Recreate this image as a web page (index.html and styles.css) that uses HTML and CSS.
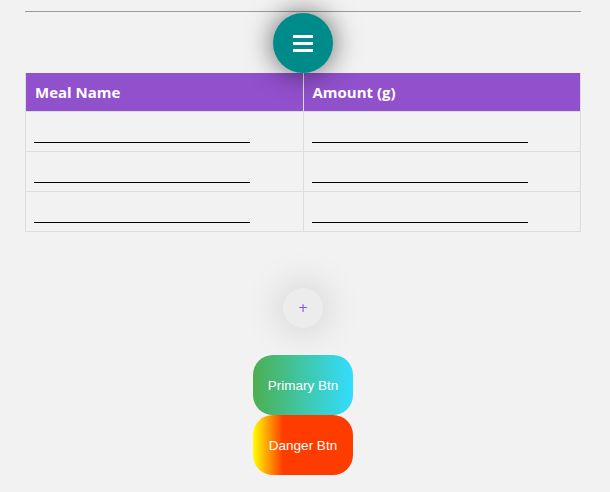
FILE: index.html
```html
<!DOCTYPE html>
<html>
<head>
<meta charset="utf-8">
<link rel="stylesheet" href="styles.css">
</head>
<body>
<div class="page">
  <hr class="rule">
  <div class="menu-row">
    <button class="menu-btn" aria-label="Menu">
      <svg width="20" height="17" viewBox="0 0 20 17"><rect x="0" y="0" width="20" height="3" fill="#fff"/><rect x="0" y="7" width="20" height="3" fill="#fff"/><rect x="0" y="14" width="20" height="3" fill="#fff"/></svg>
    </button>
  </div>
  <table class="meals">
    <thead>
      <tr><th>Meal Name</th><th>Amount (g)</th></tr>
    </thead>
    <tbody>
      <tr><td><input class="field" type="text"></td><td><input class="field" type="text"></td></tr>
      <tr><td><input class="field" type="text"></td><td><input class="field" type="text"></td></tr>
      <tr><td><input class="field" type="text"></td><td><input class="field" type="text"></td></tr>
    </tbody>
  </table>
  <div class="actions">
    <button class="add-btn">+</button>
    <div class="btn-stack">
      <button class="grad-btn primary">Primary Btn</button>
      <button class="grad-btn danger">Danger Btn</button>
    </div>
  </div>
</div>
</body>
</html>
```
FILE: styles.css
```css
html, body {
  margin: 0;
  padding: 0;
  background: #f2f2f2;
}
.page {
  width: 556px;
  margin-left: 25px;
  padding-top: 11px;
}
.rule {
  margin: 0;
  border: 0;
  height: 1px;
  background: #999;
}
.menu-row {
  display: flex;
  justify-content: center;
  padding-top: 1px;
}
.menu-btn {
  width: 60px;
  height: 60px;
  border-radius: 50%;
  border: 0;
  padding: 0;
  background: #008b8b;
  display: flex;
  align-items: center;
  justify-content: center;
  box-shadow: 0 0 28px rgba(0,0,0,0.6);
  position: relative;
  z-index: 1;
}
.meals {
  width: 556px;
  border-collapse: collapse;
  table-layout: fixed;
  font-family: "Open Sans", sans-serif;
}
.meals th {
  background: #9150cc;
  color: #fff;
  font-weight: 700;
  font-size: 15px;
  text-align: left;
  height: 38px;
  padding: 0 9px;
  border: 1px solid #ddd;
  border-top: 0;
  border-bottom: 0;
}
.meals td {
  height: 39px;
  padding: 0 8px;
  border: 1px solid #ddd;
  vertical-align: top;
}
.field {
  display: block;
  box-sizing: border-box;
  width: 216px;
  height: 22px;
  margin-top: 9px;
  border: 0;
  border-bottom: 1px solid #000;
  background: transparent;
  outline: none;
}
.actions {
  display: flex;
  flex-direction: column;
  align-items: center;
  padding-top: 56px;
}
.add-btn {
  width: 40px;
  height: 40px;
  border-radius: 50%;
  border: 0;
  padding: 0;
  background: #ececec;
  color: #9150cc;
  font-family: "DejaVu Sans", sans-serif;
  font-size: 12px;
  line-height: 40px;
  box-shadow: 0 0 40px rgba(0,0,0,0.2);
}
.btn-stack {
  display: flex;
  flex-direction: column;
  margin-top: 27px;
}
.grad-btn {
  width: 100px;
  height: 60px;
  border: 0;
  border-radius: 20px;
  color: #fff;
  font-family: "Liberation Sans", Arial, sans-serif;
  font-size: 13.5px;
  padding: 0;
}
.primary {
  background: linear-gradient(to right, #4caf50, #33ddff);
}
.danger {
  background: linear-gradient(to right, #ffff00, #ff3c00 30%);
}
```
